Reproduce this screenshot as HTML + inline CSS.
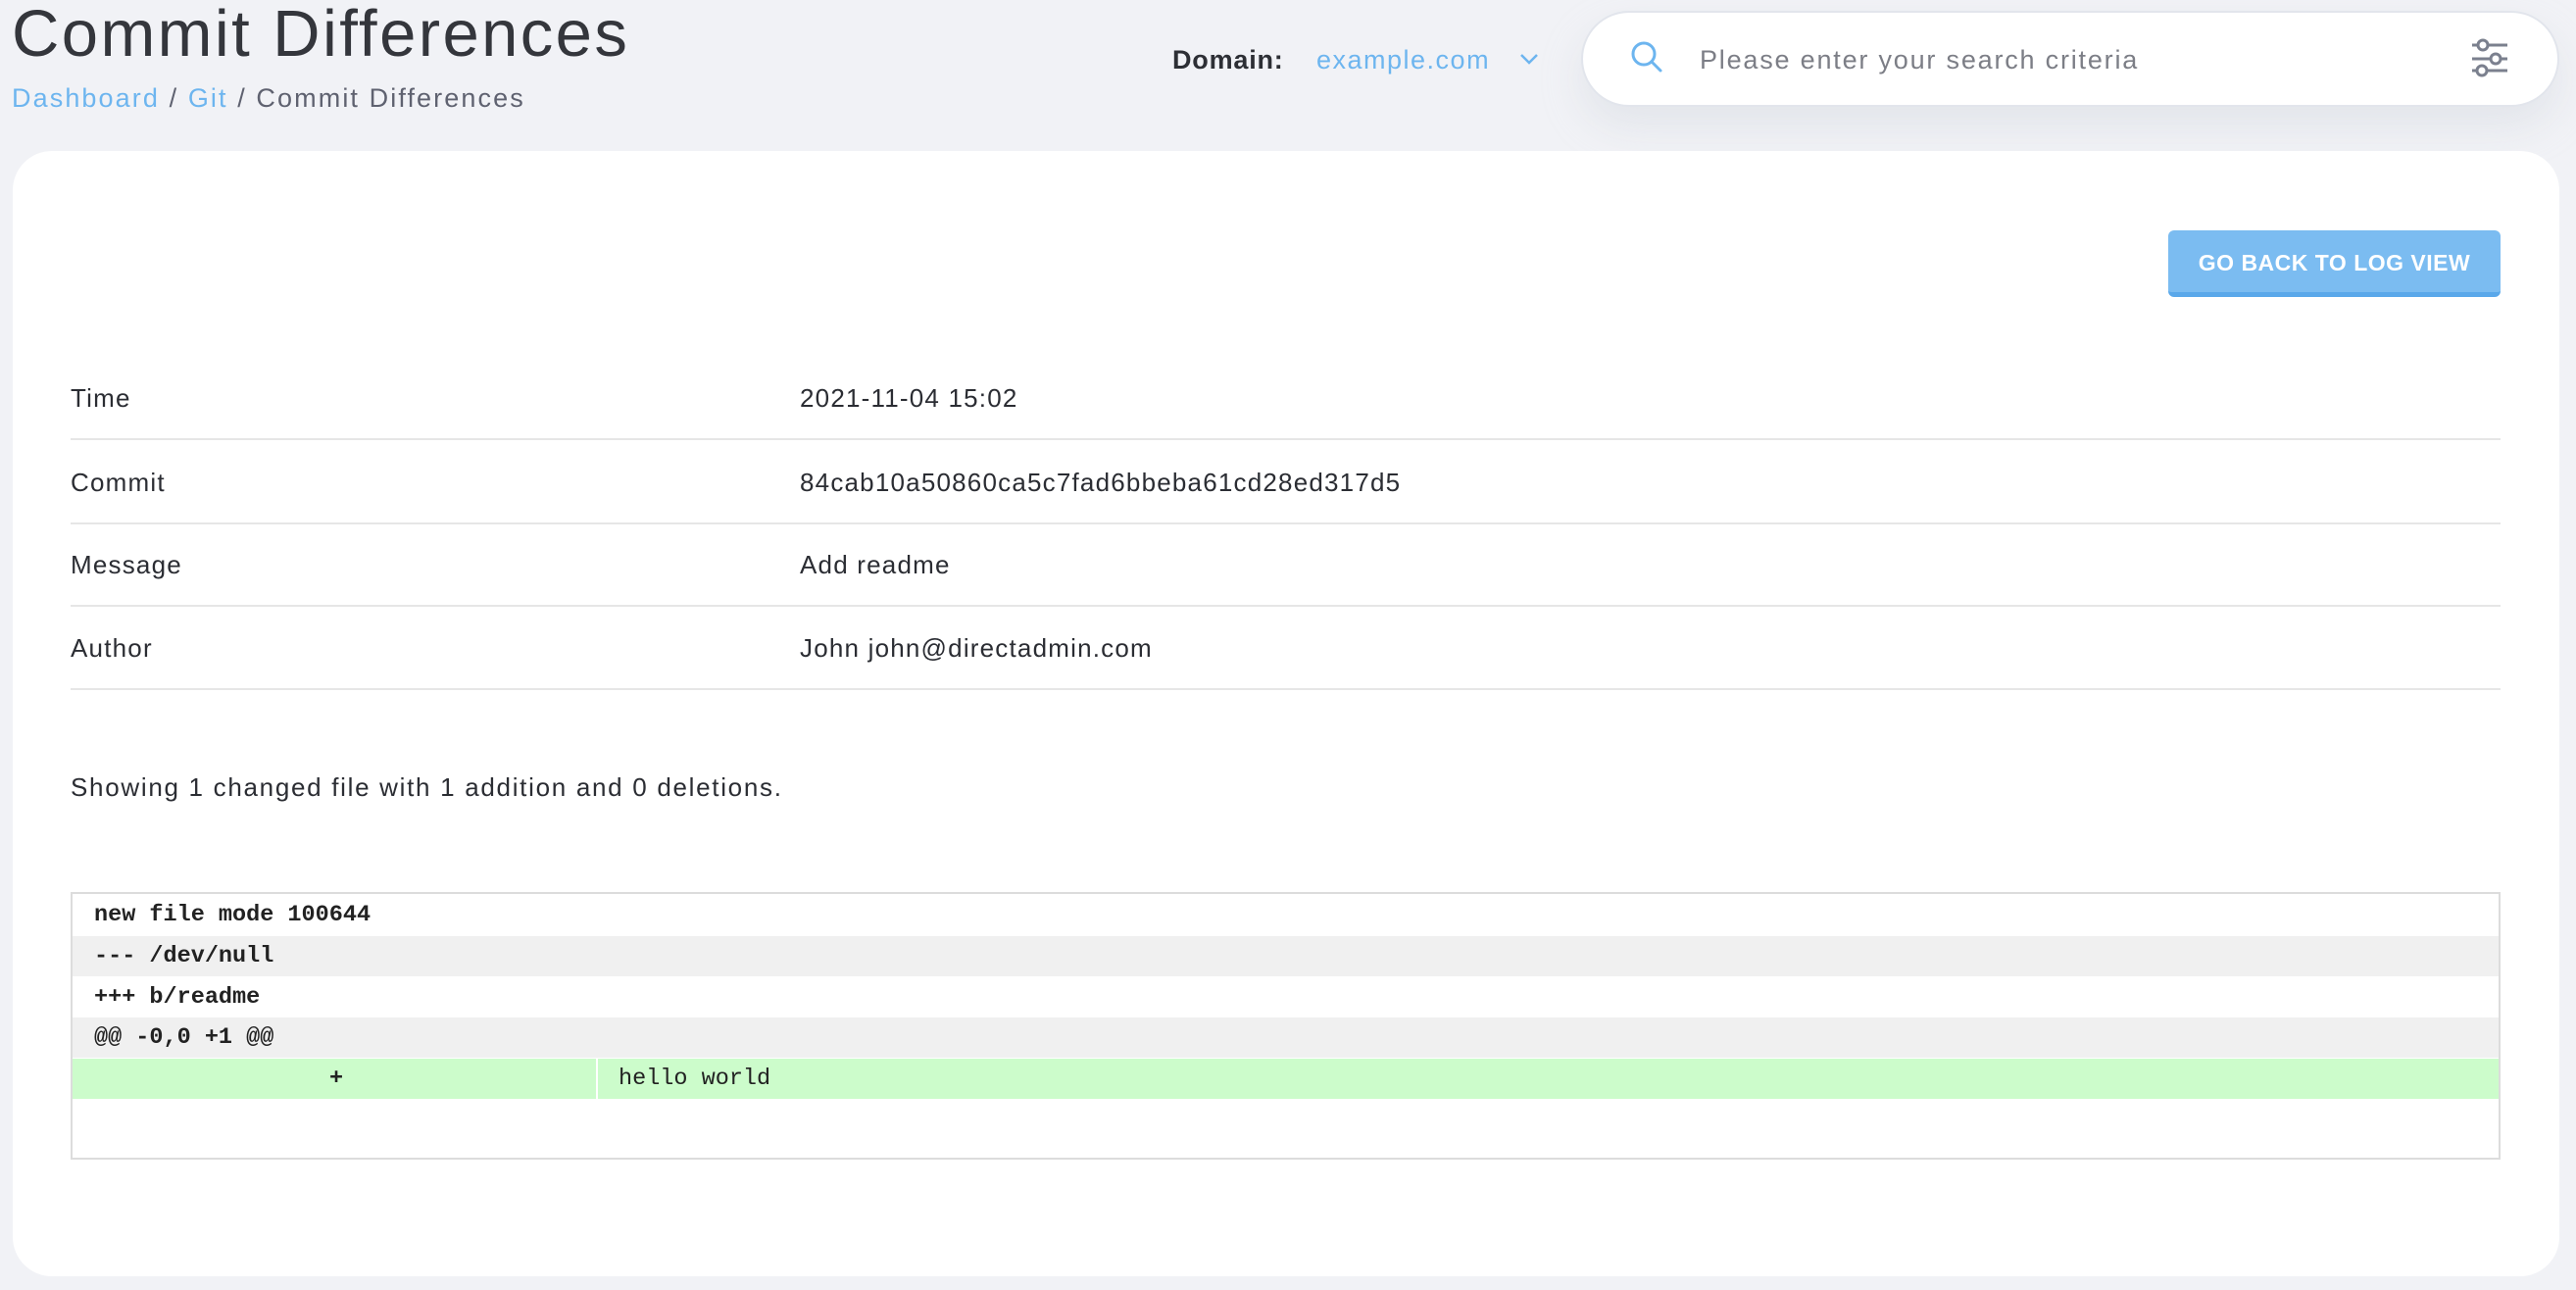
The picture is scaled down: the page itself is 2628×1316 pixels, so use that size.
<!DOCTYPE html>
<html><head><meta charset="utf-8"><style>
*{margin:0;padding:0;box-sizing:border-box}
body{width:2628px;height:1316px;background:#f1f2f6;font-family:"Liberation Sans",sans-serif;position:relative;overflow:hidden;color:#2b2d33}
.abs{position:absolute}
h1{position:absolute;left:12px;top:-4px;font-size:67px;font-weight:normal;color:#34363c;letter-spacing:2.4px}
.bc{left:12px;top:85px;font-size:27px;color:#5f6270;letter-spacing:2.1px}
.bc a{color:#6db5ef;text-decoration:none}
.dom{left:1196px;top:46px;font-size:27px;font-weight:bold;color:#2d2f35;letter-spacing:0.8px}
.domv{left:1343px;top:46px;font-size:27px;color:#6db5ef;letter-spacing:1.5px}
.search{left:1613px;top:11px;width:998px;height:98px;background:#fff;border:2px solid #e2e5ec;border-radius:50px;box-shadow:0 20px 40px rgba(200,205,215,0.35)}
.ph{left:1734px;top:46px;font-size:27px;color:#7c7e86;letter-spacing:1.8px}
.card{left:13px;top:154px;width:2598px;height:1148px;background:#fff;border-radius:40px}
.btn{left:2212px;top:235px;width:339px;height:68px;background:#7bbcf1;border-radius:6px;border-bottom:5px solid #5aa8ea;color:#fff;font-weight:bold;font-size:23px;text-align:center;line-height:66px;letter-spacing:0.5px}
.row{left:72px;width:2479px;height:85px;border-bottom:2px solid #e6e6e6;font-size:26px;letter-spacing:1.2px}
.row span{position:absolute;top:27px}
.row .v{left:744px}
.show{left:72px;top:788px;font-size:26px;letter-spacing:1.7px}
.diff{left:72px;top:910px;width:2479px;height:273px;border:2px solid #dcdcdc;font-family:"Liberation Mono",monospace;font-size:23.5px}
.dl{position:absolute;left:0;width:100%;height:41px;line-height:41px;padding-left:22px;font-weight:bold;color:#222}
.g{background:#f0f0f0}
.add{background:#ccfccb;font-weight:normal}
</style></head><body>
<h1>Commit Differences</h1>
<div class="abs bc"><a>Dashboard</a> / <a>Git</a> / Commit Differences</div>
<div class="abs dom">Domain:</div>
<div class="abs domv">example.com</div>
<svg class="abs" style="left:1548px;top:52px" width="24" height="16" viewBox="0 0 24 16"><path d="M4 4l8 8 8-8" fill="none" stroke="#6db5ef" stroke-width="2.5"/></svg>
<div class="abs search"></div>
<svg class="abs" style="left:1660px;top:38px" width="44" height="44" viewBox="0 0 44 44"><circle cx="17" cy="17" r="11" fill="none" stroke="#6db5ef" stroke-width="3"/><path d="M25 25l9 9" stroke="#6db5ef" stroke-width="3" stroke-linecap="round"/></svg>
<div class="abs ph">Please enter your search criteria</div>
<svg class="abs" style="left:2515px;top:36px" width="50" height="46" viewBox="0 0 50 46"><g stroke="#7b808e" stroke-width="3" fill="#fff"><path d="M7 10h36M7 24h36M7 36h36"/><circle cx="18" cy="10" r="5"/><circle cx="31" cy="24" r="5"/><circle cx="17" cy="36" r="5"/></g></svg>
<div class="abs card"></div>
<div class="abs btn">GO BACK TO LOG VIEW</div>
<div class="abs row" style="top:364px"><span>Time</span><span class="v">2021-11-04 15:02</span></div>
<div class="abs row" style="top:450px"><span>Commit</span><span class="v">84cab10a50860ca5c7fad6bbeba61cd28ed317d5</span></div>
<div class="abs row" style="top:534px"><span>Message</span><span class="v">Add readme</span></div>
<div class="abs row" style="top:619px"><span>Author</span><span class="v">John john@directadmin.com</span></div>
<div class="abs show">Showing 1 changed file with 1 addition and 0 deletions.</div>
<div class="abs diff">
<div class="dl" style="top:1px">new file mode 100644</div>
<div class="dl g" style="top:43px">--- /dev/null</div>
<div class="dl" style="top:85px">+++ b/readme</div>
<div class="dl g" style="top:126px">@@ -0,0 +1 @@</div>
<div class="dl add" style="top:168px;padding:0"><span style="position:absolute;left:262px;font-weight:bold">+</span><span style="position:absolute;left:534px;top:0;width:2px;height:41px;background:#fff"></span><span style="position:absolute;left:557px">hello world</span></div>
</div>
</body></html>
